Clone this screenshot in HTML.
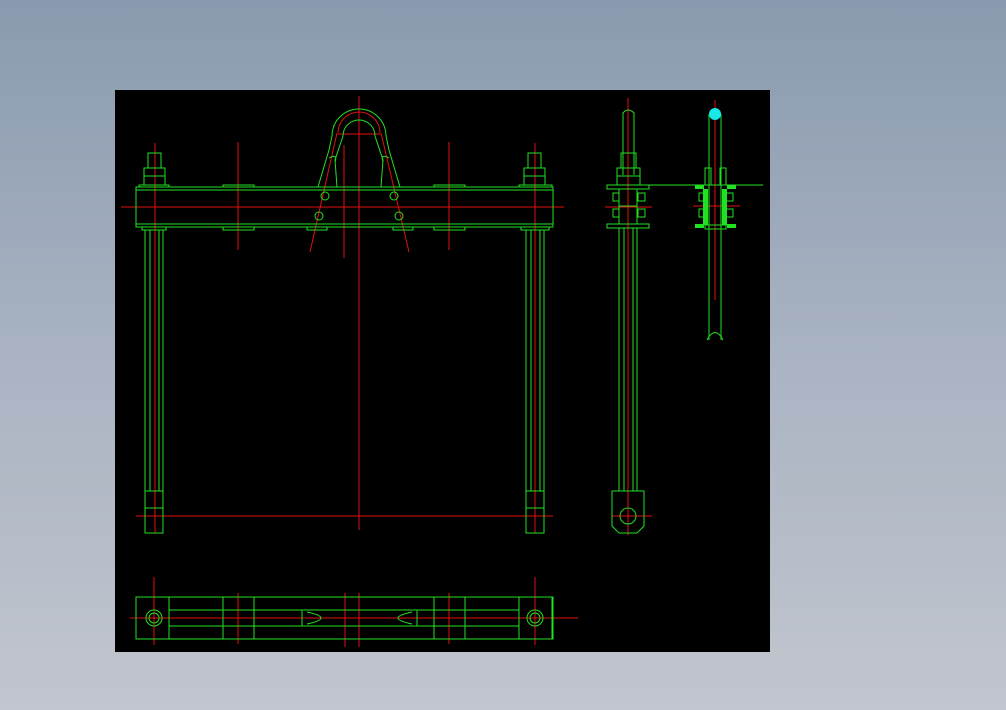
<!DOCTYPE html>
<html><head><style>
html,body{margin:0;padding:0;width:1006px;height:710px;overflow:hidden;background:linear-gradient(180deg,#8a9aaf 0%,#a9b3c2 50%,#c2c6ce 100%);}
svg{position:absolute;left:0;top:0}
</style></head><body>
<svg width="1006" height="710" viewBox="0 0 1006 710" fill="none" stroke-width="1">
<rect x="115" y="90" width="655" height="562" fill="#000"/>
<g stroke="#e01010">
<line x1="121" y1="207" x2="564" y2="207"/>
<line x1="136" y1="516" x2="553" y2="516"/>
<line x1="359" y1="96" x2="359" y2="530"/>
<line x1="344" y1="145" x2="344" y2="258"/>
<line x1="155" y1="143" x2="155" y2="533"/>
<line x1="535" y1="143" x2="535" y2="533"/>
<line x1="238" y1="142" x2="238" y2="250"/>
<line x1="449" y1="142" x2="449" y2="250"/>
<line x1="337" y1="133" x2="310" y2="252"/>
<line x1="381" y1="133" x2="409" y2="252"/>
<path d="M338 133 A21 21 0 0 1 380 133"/>
<line x1="338" y1="134" x2="380" y2="134"/>
<line x1="628" y1="98" x2="628" y2="535"/>
<line x1="715" y1="100" x2="715" y2="300"/>
<line x1="605" y1="207" x2="652" y2="207"/><line x1="693" y1="206" x2="740" y2="206"/>
<line x1="612" y1="516" x2="652" y2="516"/>
<line x1="130" y1="618" x2="578" y2="618"/>
<line x1="154" y1="577" x2="154" y2="645"/><line x1="535" y1="577" x2="535" y2="645"/>
<line x1="238" y1="593" x2="238" y2="644"/><line x1="449" y1="593" x2="449" y2="644"/>
<line x1="345" y1="593" x2="345" y2="647"/><line x1="359" y1="593" x2="359" y2="647"/>
</g>
<g stroke="#22e022">
<!-- beam -->
<rect x="136" y="187" width="417" height="40"/>
<line x1="136" y1="190" x2="553" y2="190"/><line x1="136" y1="224" x2="553" y2="224"/>
<rect x="223" y="185" width="31" height="2"/><rect x="434" y="185" width="31" height="2"/>
<rect x="223" y="227" width="31" height="3"/><rect x="434" y="227" width="31" height="3"/>
<rect x="307" y="227" width="20" height="3"/><rect x="393" y="227" width="20" height="3"/>
<!-- bolts -->
<rect x="148" y="153" width="13" height="15"/><rect x="144" y="168" width="21" height="17"/><line x1="144" y1="176" x2="165" y2="176"/>
<rect x="139" y="185" width="30" height="2"/><rect x="142" y="227" width="24" height="3"/>
<rect x="528" y="153" width="13" height="15"/><rect x="524" y="168" width="21" height="17"/><line x1="524" y1="176" x2="545" y2="176"/>
<rect x="519" y="185" width="33" height="2"/><rect x="521" y="227" width="28" height="3"/>
<!-- rods -->
<line x1="145" y1="230" x2="145" y2="533"/><line x1="163" y1="230" x2="163" y2="533"/>
<line x1="150" y1="230" x2="150" y2="491"/><line x1="159" y1="230" x2="159" y2="491"/>
<rect x="145" y="491" width="18" height="42"/><line x1="145" y1="508" x2="163" y2="508"/>
<line x1="526" y1="230" x2="526" y2="533"/><line x1="544" y1="230" x2="544" y2="533"/>
<line x1="531" y1="230" x2="531" y2="491"/><line x1="540" y1="230" x2="540" y2="491"/>
<rect x="526" y="491" width="18" height="42"/><line x1="526" y1="508" x2="544" y2="508"/>
<!-- shackle -->
<path d="M318 187 L329 150 L332 136 A27 27 0 0 1 386 136 L389 150 L400 187"/>
<path d="M337 187 L335 160 L343 136 A16 16 0 0 1 375 136 L383 160 L381 187"/>
<path d="M329 158 Q338 153 335 162"/><path d="M389 158 Q380 153 383 162"/>
<circle cx="325" cy="196" r="4"/><circle cx="394" cy="196" r="4"/>
<circle cx="319" cy="216" r="4"/><circle cx="399" cy="216" r="4"/>
<!-- side view -->
<path d="M623 175 L623 113 Q628 107 634 113 L634 175"/>
<rect x="621" y="153" width="15" height="15"/><rect x="617" y="168" width="23" height="17"/><line x1="617" y1="176" x2="640" y2="176"/>
<rect x="607" y="185" width="42" height="4"/><rect x="607" y="224" width="42" height="4"/>
<rect x="619" y="189" width="18" height="35"/><line x1="619" y1="206" x2="637" y2="206"/>
<rect x="613" y="193" width="6" height="8"/><rect x="613" y="209" width="6" height="8"/>
<rect x="638" y="193" width="7" height="8"/><rect x="638" y="209" width="7" height="8"/>
<line x1="619" y1="228" x2="619" y2="491"/><line x1="637" y1="228" x2="637" y2="491"/>
<line x1="624" y1="228" x2="624" y2="491"/><line x1="633" y1="228" x2="633" y2="491"/>
<path d="M612 491 L644 491 L644 526 L637 533 L619 533 L612 526 Z"/>
<circle cx="628" cy="516" r="8"/>
<!-- right view -->
<line x1="649" y1="185" x2="763" y2="185"/>
<line x1="709" y1="114" x2="709" y2="340"/><line x1="721" y1="114" x2="721" y2="340"/>
<path d="M707 340 Q715 325 723 340"/>
<rect x="705" y="168" width="6" height="17"/><rect x="720" y="168" width="6" height="17"/>
<rect x="699" y="193" width="6" height="8"/><rect x="699" y="209" width="6" height="8"/>
<rect x="726" y="193" width="7" height="8"/><rect x="726" y="209" width="7" height="8"/>
<rect x="705" y="225" width="21" height="4"/>
<!-- bottom view -->
<rect x="136" y="597" width="417" height="42"/>
<line x1="169" y1="610" x2="519" y2="610"/><line x1="169" y1="626" x2="519" y2="626"/>
<rect x="136" y="597" width="33" height="42"/><rect x="223" y="597" width="31" height="42"/>
<rect x="434" y="597" width="31" height="42"/><rect x="519" y="597" width="33" height="42"/>
<circle cx="154" cy="618" r="8"/><circle cx="154" cy="618" r="5"/>
<circle cx="535" cy="618" r="8"/><circle cx="535" cy="618" r="5"/>
<rect x="302" y="610" width="115" height="16"/>
<path d="M307 612 Q335 618 307 624"/><path d="M412 612 Q384 618 412 624"/>
</g>
<g fill="#22e022" stroke="none">
<rect x="695" y="185" width="9" height="4"/><rect x="727" y="185" width="9" height="4"/>
<rect x="703" y="189" width="5" height="36"/><rect x="722" y="189" width="5" height="36"/>
<rect x="695" y="224" width="9" height="4"/><rect x="727" y="224" width="9" height="4"/>
</g>
<circle cx="715" cy="114" r="6" fill="#19e8e8"/>
</svg>
</body></html>
